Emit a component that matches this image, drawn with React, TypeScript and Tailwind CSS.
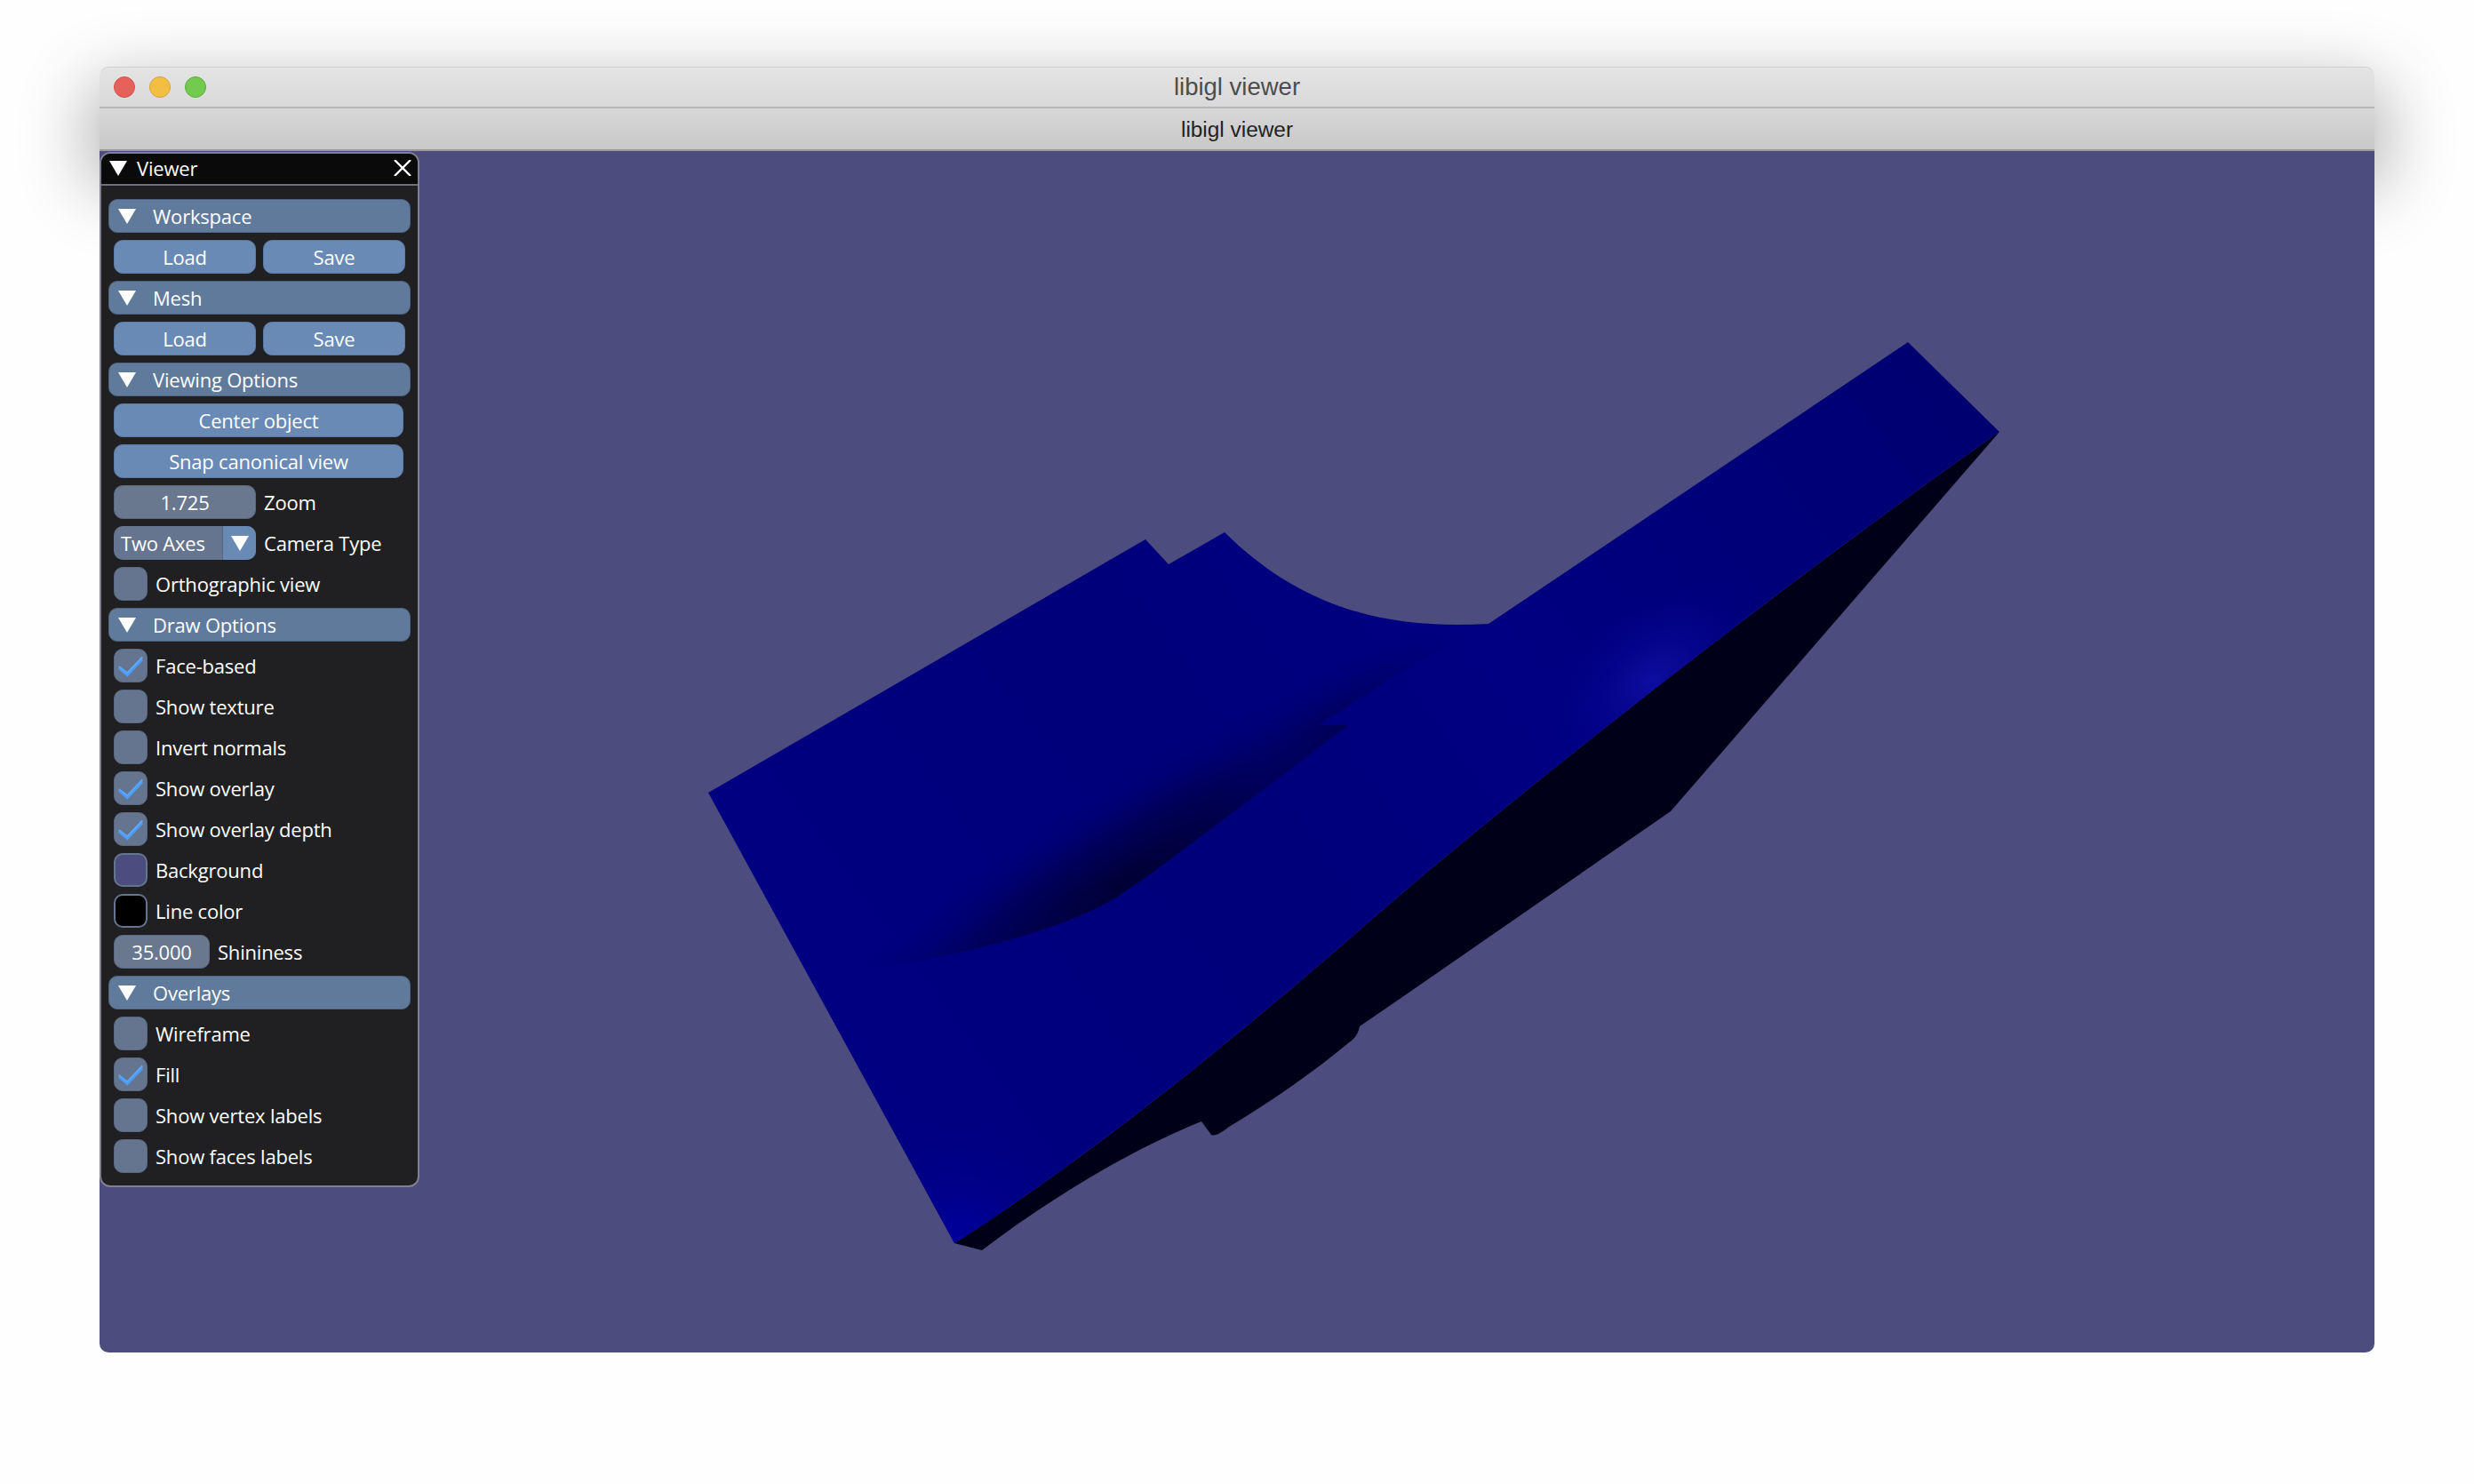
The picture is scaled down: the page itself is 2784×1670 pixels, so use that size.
import type { ReactNode } from "react";

const frontEdge = "C2050 626 1720 880 1526 1050 C1400 1160 1230 1300 1074 1399";
const faceOutline = `M797 892 L1289 607 L1315 635 L1378 599 C1470 690 1570 708 1675 702 L2147 385 L2250 486 ${frontEdge} Z`;
const sideOutline = `M2250 486 ${frontEdge} L1105 1407 C1180 1350 1270 1295 1352 1262 L1363 1277 Q1368 1280 1383 1268 C1430 1240 1480 1205 1522 1170 Q1528 1165 1530 1155 L1581 1120 L1880 913 Z`;

function Triangle({ className = "w-[20px] h-[17px]" }: { className?: string }) {
  return (
    <svg viewBox="0 0 20 17" className={`${className} shrink-0`} aria-hidden="true">
      <polygon points="0,0 20,0 10,17" fill="#ffffff" />
    </svg>
  );
}

function Section({ title }: { title: string }) {
  return (
    <div className="flex h-[38px] items-center gap-[19px] rounded-[10px] border border-[#4f6480] bg-[#607a9c] pl-[10px]">
      <Triangle />
      <span className="text-white">{title}</span>
    </div>
  );
}

function Btn({ label, wide }: { label: string; wide?: boolean }) {
  return (
    <button
      type="button"
      className={`h-[38px] rounded-[10px] border border-[#5c7aa3] bg-[#6a8ab6] text-white ${wide ? "w-[326px]" : "w-[160px]"}`}
    >
      {label}
    </button>
  );
}

function Row({ children }: { children: ReactNode }) {
  return <div className="ml-[6px] flex h-[38px] items-center gap-[9px] text-white">{children}</div>;
}

function Check({ label, on }: { label: string; on?: boolean }) {
  return (
    <Row>
      <div className="h-[38px] w-[38px] rounded-[10px] border border-[#5a6880] bg-[#66758f]">
        {on ? (
          <svg viewBox="0 0 38 38" className="h-full w-full" aria-hidden="true">
            <polyline points="5,20 15,28 33,9" fill="none" stroke="#5aa9ff" strokeWidth="2.2" />
            <polyline points="5,22 15,31 33,12" fill="none" stroke="#4a9eff" strokeWidth="2.2" />
          </svg>
        ) : null}
      </div>
      <span>{label}</span>
    </Row>
  );
}

function Swatch({ label, color }: { label: string; color: string }) {
  return (
    <Row>
      <div className={`h-[38px] w-[38px] rounded-[10px] border-2 border-[#66758f] ${color}`} />
      <span>{label}</span>
    </Row>
  );
}

function Field({ value, label, width }: { value: string; label: string; width: string }) {
  return (
    <Row>
      <div className={`flex h-[38px] items-center justify-center rounded-[10px] border border-[#5a6880] bg-[#69778f] ${width}`}>
        {value}
      </div>
      <span>{label}</span>
    </Row>
  );
}

function ViewerPanel() {
  return (
    <div className="absolute left-0 top-[1px] w-[360px] overflow-hidden rounded-[12px] border-2 border-[#80808f] bg-[#202022] pb-[14px] font-['Open_Sans',sans-serif] text-[22px] leading-none tracking-[-0.2px]">
      <div className="flex h-[36px] items-center justify-between border-b-2 border-[#6e6e80] bg-[#0a0a0a] pb-[2px] pl-[9px] pr-[7px] text-white">
        <div className="flex items-center gap-[11px]">
          <Triangle />
          <span>Viewer</span>
        </div>
        <svg viewBox="0 0 20 18" className="h-[18px] w-[20px]" aria-hidden="true">
          <path d="M1 0 L19 18 M19 0 L1 18" stroke="#ffffff" strokeWidth="2.4" />
        </svg>
      </div>
      <div className="flex flex-col gap-2 pl-[8px] pr-[8px] pt-[15px]">
        <Section title="Workspace" />
        <div className="ml-[6px] flex gap-2">
          <Btn label="Load" />
          <Btn label="Save" />
        </div>
        <Section title="Mesh" />
        <div className="ml-[6px] flex gap-2">
          <Btn label="Load" />
          <Btn label="Save" />
        </div>
        <Section title="Viewing Options" />
        <div className="ml-[6px]">
          <Btn label="Center object" wide />
        </div>
        <div className="ml-[6px]">
          <Btn label="Snap canonical view" wide />
        </div>
        <Field value="1.725" label="Zoom" width="w-[160px]" />
        <Row>
          <div className="flex h-[38px] w-[160px] overflow-hidden rounded-[10px] bg-[#66758f]">
            <span className="flex-1 self-center pl-[8px]">Two Axes</span>
            <span className="flex w-[38px] items-center justify-center border-l border-[#5a6880] bg-[#6a8ab6]">
              <Triangle />
            </span>
          </div>
          <span>Camera Type</span>
        </Row>
        <Check label="Orthographic view" />
        <Section title="Draw Options" />
        <Check label="Face-based" on />
        <Check label="Show texture" />
        <Check label="Invert normals" />
        <Check label="Show overlay" on />
        <Check label="Show overlay depth" on />
        <Swatch label="Background" color="bg-[#4c4c7f]" />
        <Swatch label="Line color" color="bg-[#000000]" />
        <Field value="35.000" label="Shininess" width="w-[108px]" />
        <Section title="Overlays" />
        <Check label="Wireframe" />
        <Check label="Fill" on />
        <Check label="Show vertex labels" />
        <Check label="Show faces labels" />
      </div>
    </div>
  );
}

function Mesh() {
  return (
    <svg viewBox="112 170 2560 1352" className="absolute inset-0 h-full w-full" aria-hidden="true">
      <defs>
        <linearGradient id="face" gradientUnits="userSpaceOnUse" x1="1000" y1="1300" x2="2200" y2="420">
          <stop offset="0" stopColor="#000082" />
          <stop offset="0.35" stopColor="#00007a" />
          <stop offset="0.6" stopColor="#000082" />
          <stop offset="1" stopColor="#000070" />
        </linearGradient>
        <radialGradient
          id="fold"
          gradientUnits="userSpaceOnUse"
          cx="0"
          cy="0"
          r="1"
          gradientTransform="translate(1270 990) rotate(-32) scale(440 105)"
        >
          <stop offset="0" stopColor="#000030" stopOpacity="0.95" />
          <stop offset="0.5" stopColor="#000040" stopOpacity="0.55" />
          <stop offset="1" stopColor="#000070" stopOpacity="0" />
        </radialGradient>
        <radialGradient
          id="foldTop"
          gradientUnits="userSpaceOnUse"
          cx="0"
          cy="0"
          r="1"
          gradientTransform="translate(1520 815) rotate(-32) scale(170 70)"
        >
          <stop offset="0" stopColor="#000048" stopOpacity="0.8" />
          <stop offset="1" stopColor="#000070" stopOpacity="0" />
        </radialGradient>
        <radialGradient
          id="spec"
          gradientUnits="userSpaceOnUse"
          cx="0"
          cy="0"
          r="1"
          gradientTransform="translate(1860 765) rotate(-40) scale(140 90)"
        >
          <stop offset="0" stopColor="#0e0ea0" />
          <stop offset="1" stopColor="#000086" stopOpacity="0" />
        </radialGradient>
        <radialGradient id="corner" gradientUnits="userSpaceOnUse" cx="1080" cy="1395" r="130">
          <stop offset="0" stopColor="#00009c" />
          <stop offset="1" stopColor="#000086" stopOpacity="0" />
        </radialGradient>
        <clipPath id="faceClip">
          <path d={faceOutline} />
        </clipPath>
        <clipPath id="foldClip">
          <path d="M952 1094 C1080 1078 1200 1045 1258 1009 L1297 982 L1460 860 L1517 816 L1483 816 L1585 751 L1675 702 L1378 500 L800 800 Z" />
        </clipPath>
      </defs>
      <path d={sideOutline} fill="#000018" />
      <path d={faceOutline} fill="url(#face)" />
      <g clipPath="url(#faceClip)">
        <rect x="1500" y="500" width="700" height="500" fill="url(#spec)" />
        <rect x="940" y="1260" width="300" height="160" fill="url(#corner)" />
      </g>
      <g clipPath="url(#foldClip)">
        <rect x="800" y="500" width="900" height="700" fill="url(#fold)" />
        <rect x="1300" y="650" width="400" height="320" fill="url(#foldTop)" />
      </g>
    </svg>
  );
}

export default function App() {
  return (
    <div className="min-h-[1670px] bg-[#fefefe] pl-[112px] pt-[75px]">
      <div className="w-[2560px]">
        <div className="relative rounded-t-[10px] font-['Liberation_Sans',sans-serif] shadow-[0_30px_80px_10px_rgba(0,0,0,0.32)]">
          <div className="flex h-[47px] items-center rounded-t-[10px] border-b-2 border-t border-[#b8b8b8] border-t-[#cfcfcf] bg-gradient-to-b from-[#e4e4e4] to-[#d9d9d9] pl-[16px]">
            <div className="flex gap-[16px]">
              <span className="h-[24px] w-[24px] rounded-full border border-[#ce5048] bg-[#e5615a]" />
              <span className="h-[24px] w-[24px] rounded-full border border-[#d8a132] bg-[#f3bf42]" />
              <span className="h-[24px] w-[24px] rounded-full border border-[#5aad3d] bg-[#72cb4f]" />
            </div>
            <span className="flex-1 pr-[120px] text-center text-[27.5px] leading-none text-[#4d4d4d]">libigl viewer</span>
          </div>
          <div className="flex h-[48px] items-center justify-center border-b-2 border-[#9a9a9a] bg-gradient-to-b from-[#d7d7d7] to-[#c8c8c8] pt-[2px] text-[24.4px] leading-none text-[#222222]">
            libigl viewer
          </div>
        </div>
        <div className="relative h-[1352px] overflow-hidden rounded-b-[10px] bg-[#4c4c7f]">
          <Mesh />
          <ViewerPanel />
        </div>
      </div>
    </div>
  );
}
